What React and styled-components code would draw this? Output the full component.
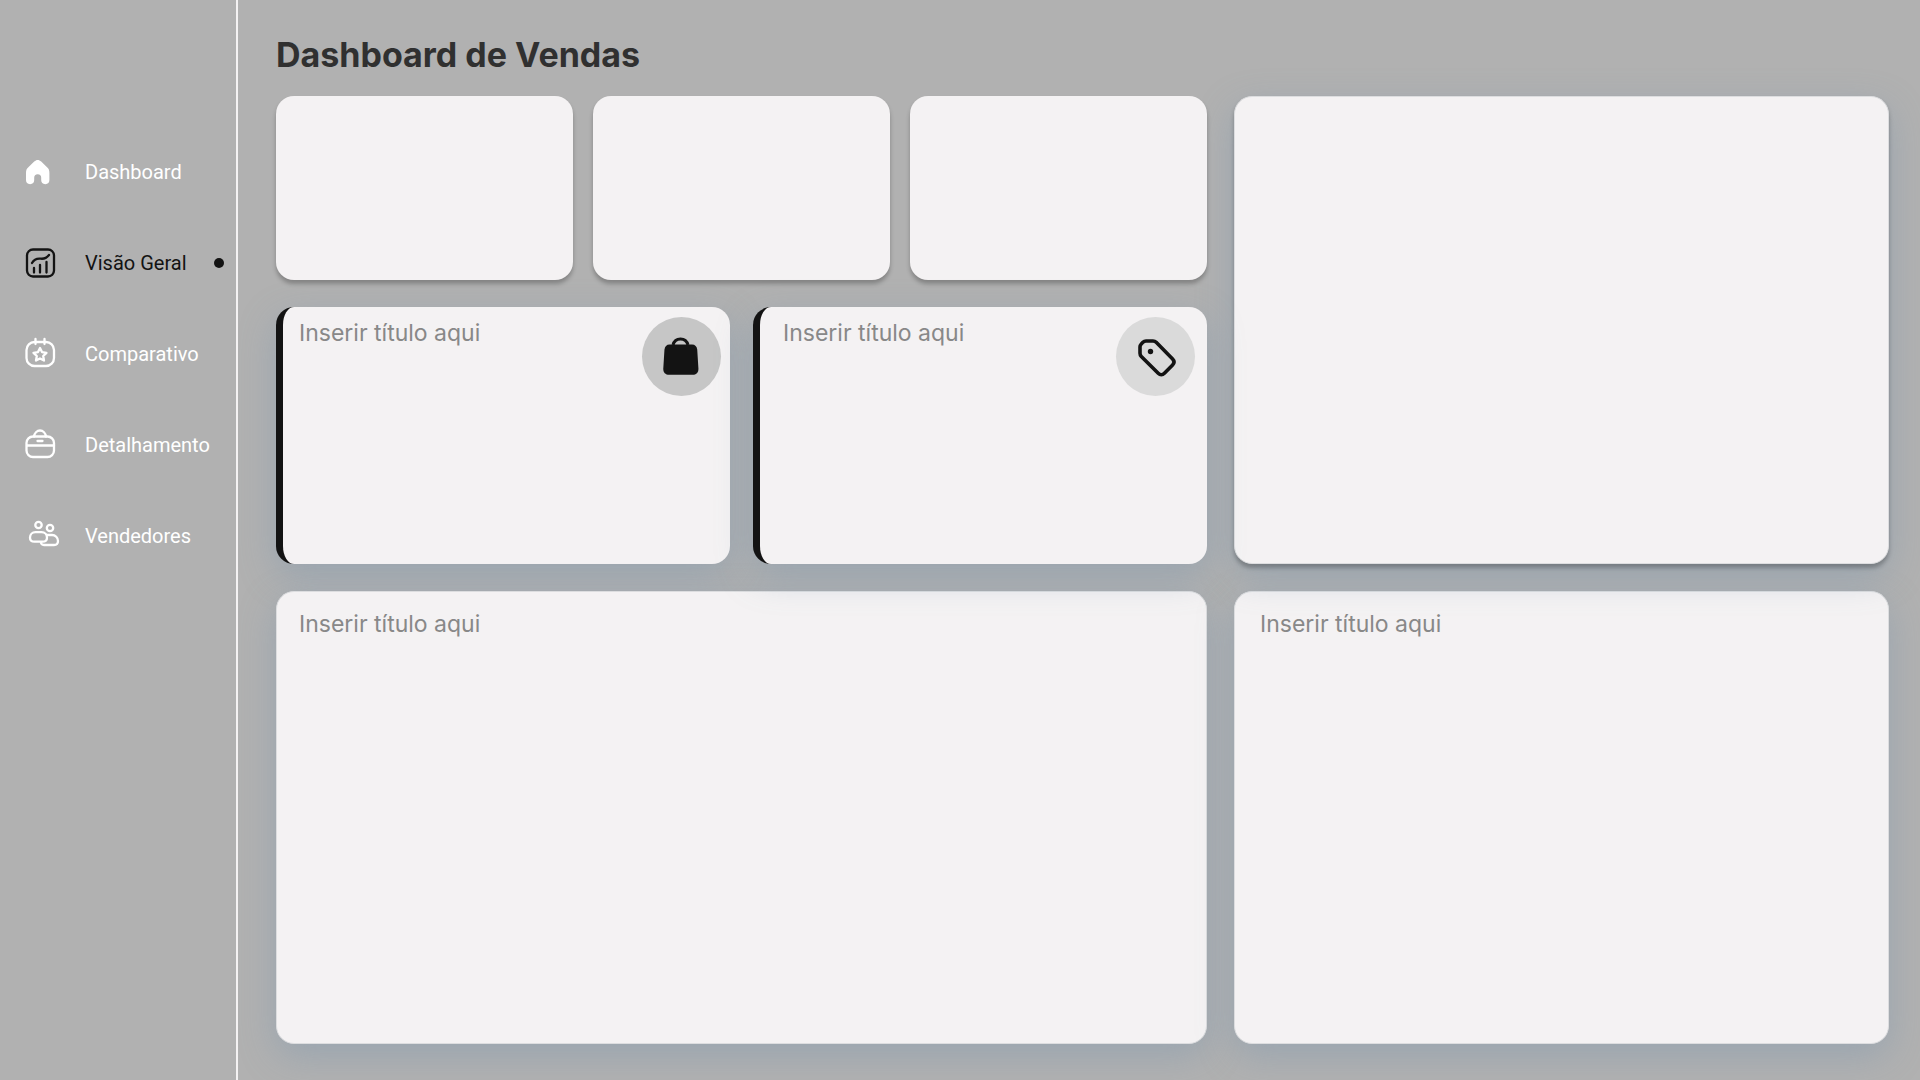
import React from 'react';
import styled, { createGlobalStyle } from 'styled-components';

const GlobalStyle = createGlobalStyle`
    * {
        box-sizing: border-box;
    }

    body {
        margin: 0;
        background: #b1b1b1;
        font-family: Inter, sans-serif;
    }
`;

const Page = styled.div`
    display: flex;
    min-height: 100vh;
`;

const Sidebar = styled.aside`
    flex: none;
    width: 238px;
    padding-top: 126px;
    border-right: solid 2px #f4f2f3;
`;

const NavList = styled.ul`
    margin: 0;
    padding: 0;
    list-style: none;
`;

const NavLink = styled.a`
    display: flex;
    align-items: center;
    height: 91px;
    padding: 0 12px 0 24px;
    color: ${props => props.$active ? '#131313' : '#fff'};
    font: 400 20px Roboto, sans-serif;
    text-decoration: none;
    white-space: nowrap;
`;

const NavIcon = styled.svg`
    flex: none;
    width: 36px;
    height: 36px;
    margin-right: 25px;
    fill: none;
    stroke: currentColor;
    stroke-width: 2.3;
    stroke-linecap: round;
    stroke-linejoin: round;
`;

const ActiveDot = styled.span`
    width: 10px;
    height: 10px;
    margin-left: auto;
    border-radius: 50%;
    background: #131313;
`;

const Main = styled.main`
    flex: 1;
    display: flex;
    flex-direction: column;
    min-width: 0;
    padding: 0 31px 36px 38px;
    overflow: hidden;
`;

const PageTitle = styled.h1`
    display: flex;
    align-items: center;
    height: 96px;
    margin: 0;
    padding-top: 12px;
    color: #303030;
    font-size: 34px;
    font-weight: 700;
`;

const Board = styled.div`
    flex: 1;
    display: grid;
    grid-template-columns: 931fr 655fr;
    grid-template-rows: 468fr 453fr;
    gap: 27px;
`;

const Summary = styled.div`
    display: grid;
    grid-template-rows: 184fr 257fr;
    gap: 27px;
`;

const StatRow = styled.div`
    display: grid;
    grid-template-columns: repeat(3, 1fr);
    gap: 20px;
`;

const HighlightRow = styled.div`
    display: grid;
    grid-template-columns: repeat(2, 1fr);
    gap: 23px;
`;

const Card = styled.section`
    z-index: ${props => props.$layer || 0};
    border-radius: 18px;
    background: #f4f2f3;
`;

const StatCard = styled(Card)`
    box-shadow: 0 4px 4px rgba(0, 0, 0, 0.25);
`;

const HighlightCard = styled(Card)`
    display: flex;
    justify-content: space-between;
    padding: 10px ${props => props.$end}px 10px ${props => props.$start}px;
    border-left: solid 7px #131313;
    box-shadow: 0 12px 36px rgba(112, 144, 176, 0.36);
`;

const ChartCard = styled(Card)`
    padding: 16px ${props => props.$start}px;
    border: solid 1px #dcdddf;
    box-shadow: 0 12px 36px rgba(112, 144, 176, 0.36);
`;

const FeatureCard = styled(ChartCard)`
    box-shadow: 0 4px 4px rgba(0, 0, 0, 0.25), 0 12px 36px rgba(112, 144, 176, 0.36);
`;

const CardTitle = styled.h2`
    margin: 0;
    color: #888;
    font-size: 23px;
    font-weight: 400;
    line-height: 32px;
`;

const Badge = styled.div`
    display: flex;
    align-items: center;
    justify-content: center;
    width: 79px;
    height: 79px;
    border-radius: 50%;
    background: ${props => props.$color};
`;

const BadgeIcon = styled.svg`
    width: 48px;
    height: 48px;
    color: #131313;
`;

const HomeIcon = () => (
    <NavIcon viewBox="0 0 36 36">
        <path fill="currentColor" stroke="none" d="M2 19c0-3 .6-4.300 2.600-6.100l5.600-5.400c2.200-2.100 4.800-2.100 7 0l5.600 5.400c2 1.800 2.600 3.100 2.600 6.100v7.100a4.100 4.100 0 0 1-8.200 0v-2.300a3.500 3.500 0 0 0-7 0v2.300a4.100 4.100 0 0 1-8.200 0z" />
    </NavIcon>
);

const ChartIcon = () => (
    <NavIcon viewBox="0 0 36 36">
        <rect x="3" y="4.500" width="27" height="27" rx="6" />
        <path d="M10 23v4.500M16 20v7.500M22.500 17v10.500M8 18c2.500-4.500 5.500-4.800 9-4.300 3.600.3 6-1.200 8-3.700" />
    </NavIcon>
);

const CalendarIcon = () => (
    <NavIcon viewBox="0 0 36 36">
        <rect x="2.500" y="6" width="27.500" height="24" rx="8" />
        <path d="M11.500 3v5M20.500 3v5M16 12l2 4.100 4.500.700-3.300 3.200.8 4.500-4-2.100-4 2.100.8-4.500-3.300-3.200 4.500-.700z" />
    </NavIcon>
);

const BagIcon = () => (
    <NavIcon viewBox="0 0 36 36">
        <rect x="2.500" y="9.500" width="27.500" height="20.500" rx="6.500" />
        <path d="M3 18.500h27M13.500 14h5M10 9.500c.5-3.300 3-6 6-6s5.500 2.700 6 6" />
    </NavIcon>
);

const PeopleIcon = () => (
    <NavIcon viewBox="0 0 36 36">
        <circle cx="14.500" cy="7" r="3.200" />
        <circle cx="26" cy="10" r="3.200" />
        <path d="M11.500 14.200h6c3.300 0 5.500 2.600 5.500 5.500 0 2.300-1.600 4-4.500 4h-8c-3 0-4.500-1.700-4.500-4 0-2.900 2.200-5.500 5.500-5.500zM23 17h5c3.300 0 6 2.800 6 6 0 2.500-1.400 4-4 4H20c-2 0-3-1-3.200-3" />
    </NavIcon>
);

const ShoppingBagIcon = () => (
    <BadgeIcon viewBox="0 0 48 48">
        <path fill="currentColor" d="M11.500 11.500h22.500c3 0 5 2 5.200 5l1.200 19c.2 4-2 6.300-6 6.300H11.300c-4 0-6.200-2.300-6-6.300l1.200-19c.2-3 2.200-5 5-5z" />
        <path fill="none" stroke="currentColor" strokeWidth="3" d="M15 12c1-3.800 4-6 7.500-6s6.500 2.200 7.500 6" />
    </BadgeIcon>
);

const TagIcon = () => (
    <BadgeIcon viewBox="0 0 48 48">
        <path fill="none" stroke="currentColor" strokeWidth="3.600" strokeLinejoin="round" d="M14 8h7c1.300 0 2.300.4 3.200 1.300l16.400 16.600c2 2 2 4.100 0 6.100l-8.200 8.200c-2 2-4.200 2-6.200 0L9.300 23.500c-.9-.9-1.300-2-1.300-3.200v-6.300c0-1.300.4-2.200 1.300-3.100l1.600-1.600c.9-.9 1.800-1.300 3.100-1.300z" />
        <circle cx="18.500" cy="18.500" r="2.700" fill="currentColor" />
    </BadgeIcon>
);

const navItems = [
    { label: 'Dashboard', Icon: HomeIcon },
    { label: 'Visão Geral', Icon: ChartIcon, active: true },
    { label: 'Comparativo', Icon: CalendarIcon },
    { label: 'Detalhamento', Icon: BagIcon },
    { label: 'Vendedores', Icon: PeopleIcon },
];

const Navigation = () => (
    <Sidebar>
        <nav>
            <NavList>
                {navItems.map(({ label, Icon, active }) => (
                    <li key={label}>
                        <NavLink href="#" $active={active}>
                            <Icon />
                            {label}
                            {active && <ActiveDot />}
                        </NavLink>
                    </li>
                ))}
            </NavList>
        </nav>
    </Sidebar>
);

const App = () => (
    <Page>
        <GlobalStyle />
        <Navigation />
        <Main>
            <PageTitle>Dashboard de Vendas</PageTitle>
            <Board>
                <Summary>
                    <StatRow>
                        <StatCard $layer={2} />
                        <StatCard $layer={2} />
                        <StatCard $layer={2} />
                    </StatRow>
                    <HighlightRow>
                        <HighlightCard $start={16} $end={9}>
                            <CardTitle>Inserir título aqui</CardTitle>
                            <Badge $color="#c6c6c6"><ShoppingBagIcon /></Badge>
                        </HighlightCard>
                        <HighlightCard $start={23} $end={12} $layer={2}>
                            <CardTitle>Inserir título aqui</CardTitle>
                            <Badge $color="#dadada"><TagIcon /></Badge>
                        </HighlightCard>
                    </HighlightRow>
                </Summary>
                <FeatureCard $start={24} $layer={1} />
                <ChartCard $start={22}>
                    <CardTitle>Inserir título aqui</CardTitle>
                </ChartCard>
                <ChartCard $start={25}>
                    <CardTitle>Inserir título aqui</CardTitle>
                </ChartCard>
            </Board>
        </Main>
    </Page>
);

export default App;
